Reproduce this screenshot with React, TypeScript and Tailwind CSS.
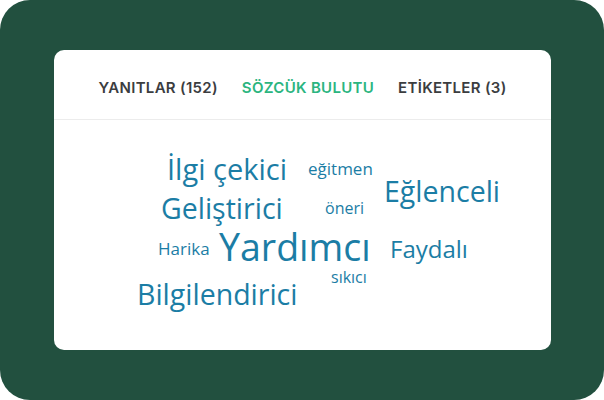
import React from 'react';

type Word = { text: string; x: number; cy: number; size: number };

// positions are relative to the cloud area (card body)
const words: Word[] = [
  { text: 'İlgi çekici', x: 113, cy: 48, size: 29 },
  { text: 'eğitmen', x: 254, cy: 48.5, size: 17 },
  { text: 'Eğlenceli', x: 330, cy: 71.5, size: 28.5 },
  { text: 'Geliştirici', x: 107, cy: 88, size: 28.5 },
  { text: 'öneri', x: 271, cy: 88, size: 16 },
  { text: 'Harika', x: 104, cy: 128, size: 17 },
  { text: 'Yardımcı', x: 165, cy: 127, size: 37.5 },
  { text: 'Faydalı', x: 336, cy: 129, size: 24 },
  { text: 'sıkıcı', x: 277, cy: 157, size: 16 },
  { text: 'Bilgilendirici', x: 83, cy: 174, size: 28.5 },
];

const tabs = [
  { label: 'YANITLAR (152)', active: false },
  { label: 'SÖZCÜK BULUTU', active: true },
  { label: 'ETİKETLER (3)', active: false },
];

const App = () => {
  return (
    <div className="w-[604px] h-[400px] bg-white">
      <div className="h-full rounded-[30px] bg-[#22503f] pl-[54px] pr-[53px] pt-[50px] pb-[50px]">
        <div className="h-full rounded-[10px] bg-white flex flex-col overflow-hidden">
          <div className="flex justify-center gap-6 pt-[28px] pb-[21px] border-b border-[#ececec] font-['Inter',sans-serif] font-semibold text-[15px] tracking-[0.3px] leading-[20px]">
            {tabs.map((t) => (
              <span key={t.label} className={t.active ? 'text-[#2bb57f]' : 'text-[#3b3d3f]'}>
                {t.label}
              </span>
            ))}
          </div>
          <div className="relative flex-1 font-['Open_Sans',sans-serif] text-[#1b7da5]">
            {words.map((w) => (
              <span
                key={w.text}
                className="absolute whitespace-nowrap leading-none"
                style={{ left: w.x, top: w.cy - w.size / 2, fontSize: w.size }}
              >
                {w.text}
              </span>
            ))}
          </div>
        </div>
      </div>
    </div>
  );
};

export default App;
